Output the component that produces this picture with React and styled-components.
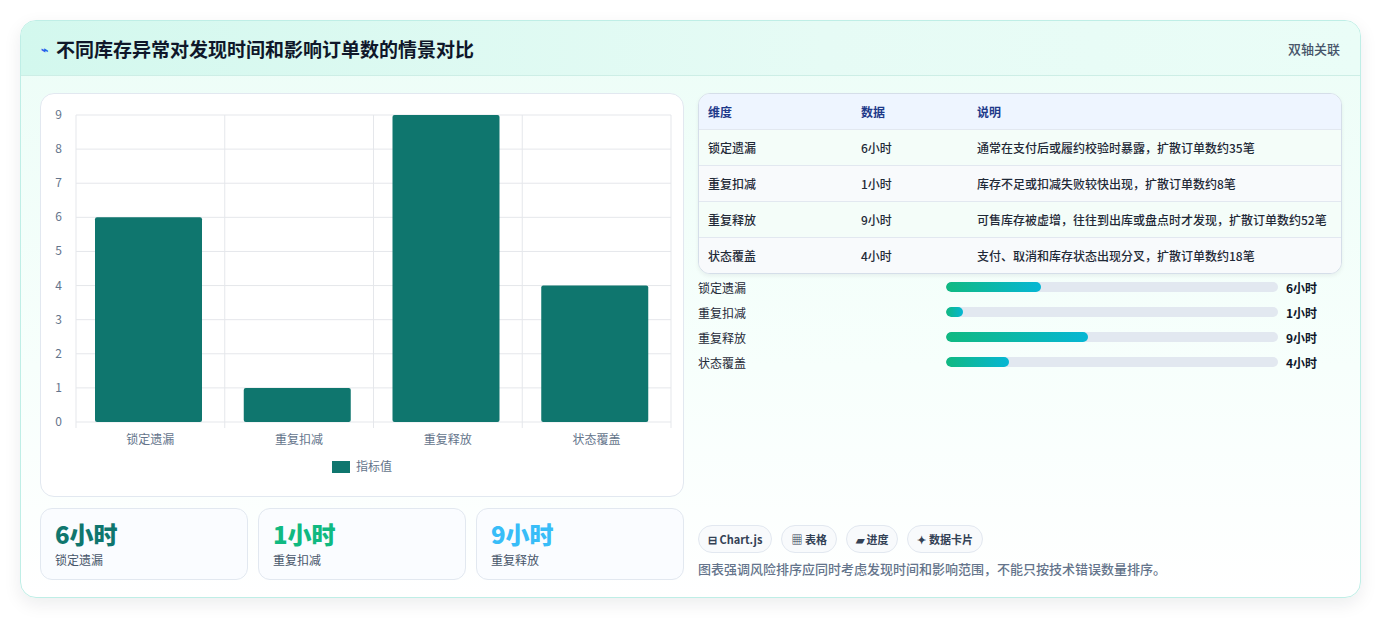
import React from "react";
import styled, { createGlobalStyle } from "styled-components";

const G = createGlobalStyle`
  body{margin:0;background:#fff;font-family:"Noto Sans CJK SC","Noto Sans",sans-serif;}
`;
const Page = styled.div`padding:20px 20px 22px 20px;background:#fff;`;
const Card = styled.div`
  border:1px solid #bfeee6;border-radius:16px;overflow:hidden;
  background:linear-gradient(180deg,#ecfdf7 0%,#f7fffc 60%,#ffffff 100%);
  box-shadow:0 6px 18px rgba(15,23,42,0.08);
`;
const Header = styled.div`
  height:54px;display:flex;align-items:center;justify-content:space-between;
  padding:0 20px;background:linear-gradient(90deg,#d3f8ee,#e6fbf5 60%,#eafdf7);
  border-bottom:1px solid #cdeee6;
`;
const Title = styled.div`font-size:19px;font-weight:700;color:#0f172a;display:flex;align-items:center;gap:8px;`;
const Tag = styled.div`font-size:13px;color:#475569;font-weight:500;`;
const Body = styled.div`display:grid;grid-template-columns:644px 644px;gap:14px;padding:17px 19px 17px 19px;`;
const Col = styled.div`display:flex;flex-direction:column;gap:11px;`;
const ChartBox = styled.div`height:402px;border:1px solid #e2e8f0;border-radius:14px;background:#fff;`;
const Stats = styled.div`display:grid;grid-template-columns:repeat(3,1fr);gap:10px;`;
const Stat = styled.div`height:72px;border:1px solid #e2e8f0;border-radius:12px;background:#fafcff;padding:10px 14px;box-sizing:border-box;`;
const StatV = styled.div`font-size:24px;font-weight:800;color:${p=>p.c};line-height:30px;`;
const StatL = styled.div`font-size:12px;color:#475569;margin-top:2px;`;
const Table = styled.div`border:1px solid #d5dee9;border-radius:12px;overflow:hidden;background:#fff;box-shadow:0 2px 4px rgba(15,23,42,0.06);`;
const Row = styled.div`
  display:grid;grid-template-columns:153px 116px 1fr;height:35px;align-items:center;padding:0 9px;
  font-size:12px;color:${p=>p.h?"#1e3a8a":"#1f2937"};font-weight:${p=>p.h?700:500};
  background:${p=>p.h?"#eef5ff":p.alt?"#f8fafc":"#f4fdf9"};
  border-bottom:${p=>p.last?"none":"1px solid #e2e8f0"};
`;
const Bars = styled.div`display:flex;flex-direction:column;gap:7px;margin-top:4px;`;
const BarRow = styled.div`display:grid;grid-template-columns:240px 332px 1fr;align-items:center;gap:0 8px;height:18px;font-size:12px;color:#1f2937;`;
const Track = styled.div`height:10px;border-radius:5px;background:#e2e8f0;overflow:hidden;`;
const Fill = styled.div`height:100%;border-radius:5px;background:linear-gradient(90deg,#10b981,#06b6d4);`;
const Val = styled.div`font-weight:700;color:#0f172a;`;
const Spacer = styled.div`flex:1;`;
const Chips = styled.div`display:flex;gap:9px;`;
const Chip = styled.div`height:26px;padding:0 9px;border:1px solid #e2e8f0;border-radius:14px;background:#f8fafc;font-size:11px;font-weight:700;color:#334155;display:flex;align-items:center;gap:4px;`;
const Note = styled.div`font-size:13px;color:#64748b;font-weight:500;margin-top:6px;margin-bottom:2px;`;

const data=[["锁定遗漏",6,"通常在支付后或履约校验时暴露，扩散订单数约35笔"],["重复扣减",1,"库存不足或扣减失败较快出现，扩散订单数约8笔"],["重复释放",9,"可售库存被虚增，往往到出库或盘点时才发现，扩散订单数约52笔"],["状态覆盖",4,"支付、取消和库存状态出现分叉，扩散订单数约18笔"]];

function Chart(){
  const x0=35,x1=630,y0=21,y1=328,u=(y1-y0)/9,cw=(x1-x0)/4;
  return <svg width="642" height="400" style={{display:"block"}} fontFamily="Noto Sans CJK SC, sans-serif">
    {Array.from({length:10},(_,i)=><g key={i}>
      <line x1={x0} x2={x1} y1={y1-i*u} y2={y1-i*u} stroke="#e5e7eb"/>
      <text x={x0-14} y={y1-i*u+4} fontSize="12" fill="#64748b" textAnchor="end">{i}</text></g>)}
    {[0,1,2,3,4].map(i=><line key={i} x1={x0+i*cw} x2={x0+i*cw} y1={y0} y2={y1+6} stroke="#e5e7eb"/>)}
    {data.map((d,i)=><g key={i}>
      <rect x={x0+i*cw+19} y={y1-d[1]*u} width={107} height={d[1]*u} fill="#0f766e" rx="2"/>
      <text x={x0+i*cw+cw/2} y={y1+22} fontSize="12" fill="#64748b" textAnchor="middle">{d[0]}</text></g>)}
    <rect x={291} y={367} width={18} height={12} fill="#0f766e"/>
    <text x={315} y={377} fontSize="12" fill="#64748b">指标值</text>
  </svg>;
}

export default function App(){
  return <Page><G/><Card>
    <Header><Title><span style={{color:"#2563eb",fontSize:12}}>⌁</span>不同库存异常对发现时间和影响订单数的情景对比</Title><Tag>双轴关联</Tag></Header>
    <Body>
      <Col>
        <ChartBox><Chart/></ChartBox>
        <Stats>
          <Stat><StatV c="#0f766e">6小时</StatV><StatL>锁定遗漏</StatL></Stat>
          <Stat><StatV c="#10b981">1小时</StatV><StatL>重复扣减</StatL></Stat>
          <Stat><StatV c="#38bdf8">9小时</StatV><StatL>重复释放</StatL></Stat>
        </Stats>
      </Col>
      <Col style={{gap:0}}>
        <Table>
          <Row h><span>维度</span><span>数据</span><span>说明</span></Row>
          {data.map((d,i)=><Row key={i} alt={i%2===1} last={i===3}><span>{d[0]}</span><span>{d[1]}小时</span><span>{d[2]}</span></Row>)}
        </Table>
        <Bars>
          {data.map((d,i)=><BarRow key={i}><span>{d[0]}</span><Track><Fill style={{width:`${Math.max(d[1]/21*100,5)}%`}}/></Track><Val>{d[1]}小时</Val></BarRow>)}
        </Bars>
        <Spacer/>
        <Chips><Chip>⊟ Chart.js</Chip><Chip>▦ 表格</Chip><Chip>▰ 进度</Chip><Chip>✦ 数据卡片</Chip></Chips>
        <Note>图表强调风险排序应同时考虑发现时间和影响范围，不能只按技术错误数量排序。</Note>
      </Col>
    </Body>
  </Card></Page>;
}
